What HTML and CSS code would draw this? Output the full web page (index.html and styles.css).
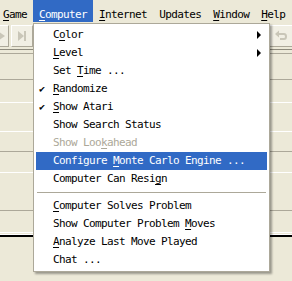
FILE: index.html
```html
<!DOCTYPE html>
<html lang="en">
<head>
    <meta charset="UTF-8">
    <title>Computer Menu</title>
    <link rel="stylesheet" href="styles.css">
</head>
<body>
    <div class="window">
        <div class="menubar">
            <span class="bar-item"><u>G</u>ame</span>
            <span class="bar-item open"><u>C</u>omputer</span>
            <span class="bar-item"><u>I</u>nternet</span>
            <span class="bar-item">Updates</span>
            <span class="bar-item"><u>W</u>indow</span>
            <span class="bar-item"><u>H</u>elp</span>
        </div>

        <div class="toolbar">
            <div class="tools">
                <span class="tool tool-cut">
                    <svg width="8" height="12" viewBox="0 0 8 12"><path d="M-2 1 L5 6 L-2 11 Z" fill="#c9c6b8"/></svg>
                </span>
                <span class="tool">
                    <svg width="12" height="12" viewBox="0 0 12 12"><path d="M2 1 L8 6 L2 11 Z" fill="#c9c6b8"/><rect x="8" y="1" width="2" height="10" fill="#c9c6b8"/></svg>
                </span>
            </div>
            <div class="tools">
                <span class="tool tool-wide">
                    <svg width="14" height="12" viewBox="0 0 14 12"><path d="M3 4 H10 Q12 4 12 6.5 Q12 9 10 9 H6" fill="none" stroke="#c9c6b8" stroke-width="2"/><path d="M1 4 L5 0.5 V7.5 Z" fill="#c9c6b8"/></svg>
                </span>
            </div>
        </div>

        <div class="panel">
            <div class="row row-a"></div>
            <div class="row row-b"></div>
            <div class="row row-c"></div>
            <div class="row row-d"></div>
            <div class="row row-e"></div>
            <div class="row row-f"></div>
            <div class="row row-g"></div>
            <div class="row row-h"></div>
        </div>

        <div class="menu">
            <div class="item"><span class="check"></span><span class="label">C<u>o</u>lor</span><span class="arrow"></span></div>
            <div class="item"><span class="check"></span><span class="label"><u>L</u>evel</span><span class="arrow"></span></div>
            <div class="item"><span class="check"></span><span class="label">Set <u>T</u>ime ...</span></div>
            <div class="item"><span class="check">&#10004;</span><span class="label"><u>R</u>andomize</span></div>
            <div class="item"><span class="check">&#10004;</span><span class="label"><u>S</u>how Atari</span></div>
            <div class="item"><span class="check"></span><span class="label">Show Search Status</span></div>
            <div class="item disabled"><span class="check"></span><span class="label">Show Loo<u>k</u>ahead</span></div>
            <div class="item active"><span class="check"></span><span class="label">Configure <u>M</u>onte Carlo Engine ...</span></div>
            <div class="item"><span class="check"></span><span class="label">Computer Can Resi<u>g</u>n</span></div>
            <div class="separator"></div>
            <div class="item"><span class="check"></span><span class="label"><u>C</u>omputer Solves Problem</span></div>
            <div class="item"><span class="check"></span><span class="label">Show Computer Problem <u>M</u>oves</span></div>
            <div class="item"><span class="check"></span><span class="label"><u>A</u>nalyze Last Move Played</span></div>
            <div class="item"><span class="check"></span><span class="label">Chat ...</span></div>
        </div>
    </div>
</body>
</html>
```

FILE: styles.css
```css
body {
    margin: 0;
    padding: 0;
    background-color: #ece9d8;
    font-family: "DejaVu Sans Mono", monospace;
    font-size: 11px;
    letter-spacing: -0.62px;
    color: #000;
}
u {
    text-decoration-thickness: 1px;
    text-underline-offset: 2px;
}
.window {
    position: relative;
    width: 292px;
    height: 281px;
    overflow: hidden;
    display: flex;
    flex-direction: column;
}
.menubar {
    display: flex;
    height: 22px;
    padding-left: 0;
    white-space: nowrap;
}
.bar-item {
    padding: 8px 6px 0 6px;
    line-height: 14px;
}
.bar-item:first-child {
    padding-left: 3px;
}
.bar-item.open {
    background-color: #316ac5;
    color: #fff;
}
.toolbar {
    display: flex;
    justify-content: space-between;
    height: 28px;
    padding-top: 3px;
    box-sizing: border-box;
    border-bottom: 1px solid #8d8a7d;
}
.tools {
    display: flex;
    gap: 2px;
}
.tool {
    display: flex;
    align-items: center;
    justify-content: center;
    width: 20px;
    height: 20px;
    border: 1px solid #fff;
    border-right-color: #aca899;
    border-bottom-color: #aca899;
    background-color: #f1efe4;
}
.tool-cut {
    width: 8px;
    border-left: none;
}
.tool-wide {
    width: 22px;
    border-right: none;
}
.panel {
    display: flex;
    flex-direction: column;
}
.row {
    border-bottom: 1px solid #c5c2b2;
}
.row-a { height: 3px; border-bottom-color: #aca899; }
.row-b { height: 25px; border-bottom-color: #aca899; }
.row-c { height: 22px; border-bottom-color: #fff; }
.row-d { height: 28px; border-bottom-color: #fff; }
.row-e { height: 19px; border-bottom-color: #aca899; }
.row-f { height: 20px; border-bottom-color: #fff; }
.row-g { height: 37px; border-bottom-color: #aca899; }
.row-h {
    height: 21px;
    border-bottom: 3px double #fff;
    box-shadow: 0 2px 0 #000;
}
.menu {
    position: absolute;
    top: 23px;
    left: 33px;
    width: 231px;
    padding: 2px;
    background-color: #fff;
    border: 1px solid #aca899;
    box-shadow: 2px 2px 2px rgba(0, 0, 0, 0.35);
}
.item {
    display: flex;
    align-items: center;
    height: 18px;
    line-height: 18px;
    white-space: nowrap;
}
.check {
    width: 17px;
    padding-left: 3px;
    box-sizing: border-box;
    font-size: 10px;
    letter-spacing: 0;
}
.label {
    flex: 1;
}
.arrow {
    width: 0;
    height: 0;
    margin-right: 6px;
    border-top: 4px solid transparent;
    border-bottom: 4px solid transparent;
    border-left: 4px solid #000;
}
.item.active {
    background-color: #316ac5;
    color: #fff;
}
.item.disabled {
    color: #aca899;
}
.separator {
    height: 1px;
    margin: 4px 1px 4px 1px;
    background-color: #aca899;
}
```
